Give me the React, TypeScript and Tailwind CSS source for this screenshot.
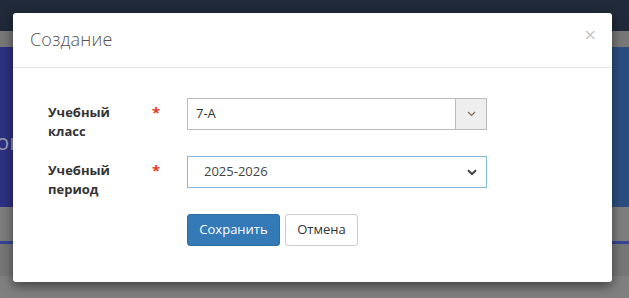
import React from 'react';

const font = { fontFamily: '"Open Sans", "Noto Sans", sans-serif' };

export default function App() {
    return (
        <div className="relative w-[629px] h-[298px] overflow-hidden" style={font}>
            {/* Page behind the backdrop */}
            <div className="flex flex-col h-full">
                <div className="h-[31px] bg-[#212a3a]" />
                <div className="h-[16px] bg-[#787878]" />
                <div className="h-[160px] bg-gradient-to-r from-[#2e3180] via-[#2b3f82] to-[#2a4f7f] flex items-center">
                    <span className="text-[22px] text-[#9aa0b8] -ml-[4px] mt-[28px]">ои</span>
                </div>
                <div className="h-[34px] bg-[#7e7e7e]" />
                <div className="h-[3px] bg-[#36459a]" />
                <div className="h-[32px] bg-[#777777]" />
                <div className="flex-1 bg-[#808080]" />
            </div>

            {/* Modal */}
            <div className="absolute left-[13px] top-[13px] w-[599px] h-[269px] bg-white rounded-[3px] shadow-[0_4px_12px_rgba(0,0,0,0.5)] flex flex-col">
                <div className="h-[55px] border-b border-[#e5e5e5] flex items-center justify-between pl-[17px] pr-[16px]">
                    <h4 className="text-[18px] font-light text-[#555] tracking-[0.2px] -mt-[2px]">Создание</h4>
                    <span className="text-[20px] leading-none text-[#c4c4c4] -mt-[10px]">×</span>
                </div>

                <div className="pt-[30px] pl-[35px] flex flex-col">
                    <div className="flex items-start">
                        <div className="w-[104px] pt-[5px] text-[13px] leading-[19px] font-bold text-[#333]">
                            Учебный<br />класс
                        </div>
                        <div className="w-[35px] pt-[5px] text-[#e4382a] text-[15px] font-bold leading-[19px]">*</div>
                        <div className="w-[300px] h-[32px] border border-[#bbbbbb] flex">
                            <div className="flex-1 flex items-center pl-[8px] text-[13px] text-[#333]">7-А</div>
                            <div className="w-[31px] border-l border-[#bbbbbb] bg-[#eeeeee] flex items-center justify-center">
                                <svg width="9" height="6" viewBox="0 0 9 6">
                                    <path d="M1 1l3.5 3.5L8 1" fill="none" stroke="#7a6a55" strokeWidth="1.2" />
                                </svg>
                            </div>
                        </div>
                    </div>

                    <div className="flex items-start mt-[15px]">
                        <div className="w-[104px] pt-[5px] text-[13px] leading-[19px] font-bold text-[#333]">
                            Учебный<br />период
                        </div>
                        <div className="w-[35px] pt-[5px] text-[#e4382a] text-[15px] font-bold leading-[19px]">*</div>
                        <div className="w-[300px] h-[32px] border border-[#86b7dd] flex items-center justify-between pl-[16px] pr-[9px]">
                            <span className="text-[13px] text-[#444]">2025-2026</span>
                            <svg width="10" height="7" viewBox="0 0 10 7">
                                <path d="M1 1.2l4 3.8 4-3.8" fill="none" stroke="#444" strokeWidth="2" />
                            </svg>
                        </div>
                    </div>

                    <div className="flex gap-[5px] mt-[15px] ml-[139px]">
                        <button className="h-[32px] w-[93px] bg-[#337ab7] border border-[#2e6da4] rounded-[3px] text-white text-[13px]">
                            Сохранить
                        </button>
                        <button className="h-[32px] w-[73px] bg-white border border-[#cccccc] rounded-[3px] text-[#333] text-[13px]">
                            Отмена
                        </button>
                    </div>
                </div>
            </div>
        </div>
    );
}
